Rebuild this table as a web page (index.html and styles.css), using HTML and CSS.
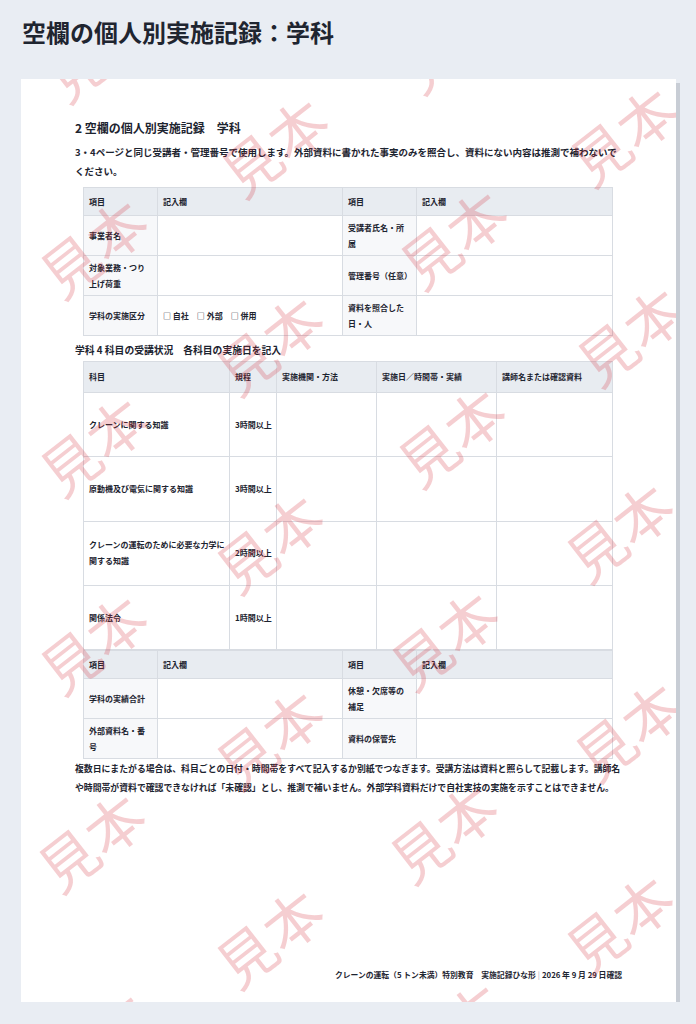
FILE: index.html
```html
<!DOCTYPE html>
<html lang="ja">
<head>
<meta charset="utf-8">
<title>空欄の個人別実施記録：学科</title>
<link rel="stylesheet" href="styles.css">
</head>
<body>
<header class="page-head">
  <h1 class="page-title">空欄の個人別実施記録：学科</h1>
</header>
<main class="sheet">
  <div class="wm-layer" aria-hidden="true">
    <span class="wm a0">見本</span><span class="wm a1">見本</span><span class="wm a2">見本</span><span class="wm a3">見本</span><span class="wm a4">見本</span><span class="wm a5">見本</span>
    <span class="wm b0">見本</span><span class="wm b1">見本</span><span class="wm b2">見本</span><span class="wm b3">見本</span><span class="wm b4">見本</span>
    <span class="wm c0">見本</span><span class="wm c1">見本</span><span class="wm c2">見本</span><span class="wm c3">見本</span><span class="wm c4">見本</span><span class="wm c5">見本</span>
    <span class="wm d0">見本</span><span class="wm d1">見本</span><span class="wm d2">見本</span><span class="wm d3">見本</span><span class="wm d4">見本</span>
  </div>

  <h2 class="sec-title">2 空欄の個人別実施記録　学科</h2>
  <p class="note lead">3・4ページと同じ受講者・管理番号で使用します。外部資料に書かれた事実のみを照合し、資料にない内容は推測で補わないでください。</p>

  <table class="grid pair">
    <colgroup><col class="w-lab"><col class="w-val"><col class="w-lab"><col class="w-val2"></colgroup>
    <thead>
      <tr><th>項目</th><th>記入欄</th><th>項目</th><th>記入欄</th></tr>
    </thead>
    <tbody>
      <tr><th class="lab">事業者名</th><td></td><th class="lab">受講者氏名・所属</th><td></td></tr>
      <tr><th class="lab">対象業務・つり上げ荷重</th><td></td><th class="lab">管理番号（任意）</th><td></td></tr>
      <tr><th class="lab">学科の実施区分</th><td><span class="chk">□ 自社</span><span class="chk">□ 外部</span><span class="chk">□ 併用</span></td><th class="lab">資料を照合した日・人</th><td></td></tr>
    </tbody>
  </table>

  <h3 class="sub-title">学科 4 科目の受講状況　各科目の実施日を記入</h3>

  <table class="grid subjects">
    <colgroup><col class="w-s1"><col class="w-s2"><col class="w-s3"><col class="w-s4"><col class="w-s5"></colgroup>
    <thead>
      <tr><th>科目</th><th>規程</th><th>実施機関・方法</th><th>実施日／時間帯・実績</th><th>講師名または確認資料</th></tr>
    </thead>
    <tbody>
      <tr><td>クレーンに関する知識</td><td>3時間以上</td><td></td><td></td><td></td></tr>
      <tr><td>原動機及び電気に関する知識</td><td>3時間以上</td><td></td><td></td><td></td></tr>
      <tr><td>クレーンの運転のために必要な力学に関する知識</td><td>2時間以上</td><td></td><td></td><td></td></tr>
      <tr><td>関係法令</td><td>1時間以上</td><td></td><td></td><td></td></tr>
    </tbody>
  </table>

  <table class="grid pair">
    <colgroup><col class="w-lab"><col class="w-val"><col class="w-lab"><col class="w-val2"></colgroup>
    <thead>
      <tr><th>項目</th><th>記入欄</th><th>項目</th><th>記入欄</th></tr>
    </thead>
    <tbody>
      <tr><th class="lab">学科の実績合計</th><td></td><th class="lab">休憩・欠席等の補足</th><td></td></tr>
      <tr><th class="lab">外部資料名・番号</th><td></td><th class="lab">資料の保管先</th><td></td></tr>
    </tbody>
  </table>

  <p class="note tail">複数日にまたがる場合は、科目ごとの日付・時間帯をすべて記入するか別紙でつなぎます。受講方法は資料と照らして記載します。講師名や時間帯が資料で確認できなければ「未確認」とし、推測で補いません。外部学科資料だけで自社実技の実施を示すことはできません。</p>

  <footer class="sheet-foot">クレーンの運転（5 トン未満）特別教育　実施記録ひな形<span class="sep">|</span>2026 年 9 月 29 日確認</footer>
</main>
</body>
</html>
```

FILE: styles.css
```css
* { box-sizing: border-box; }

html, body { margin: 0; padding: 0; }

body {
  width: 696px;
  background: #e9edf3;
  color: #1d2430;
  font-family: "Noto Sans CJK JP", "Noto Sans", sans-serif;
}

.page-head {
  height: 79px;
  padding: 16px 22px 0;
}

.page-title {
  margin: 0;
  font-size: 24px;
  line-height: 32px;
  font-weight: 700;
  color: #1f2530;
}

.sheet {
  position: relative;
  overflow: hidden;
  width: 655px;
  min-height: 923px;
  margin: 0 0 0 21px;
  padding: 40px 54px 20px;
  background: #ffffff;
  box-shadow: 4px 4px 0 #c8cdd5;
  display: flex;
  flex-direction: column;
}

/* watermark overlay */
.wm-layer {
  position: absolute;
  inset: 0;
  z-index: 2;
  pointer-events: none;
}

.wm {
  position: absolute;
  font-size: 58px;
  line-height: 1;
  font-weight: 400;
  white-space: nowrap;
  color: rgba(212, 52, 62, 0.24);
  transform: translate(-50%, -50%) rotate(-38deg);
}

.a0 { left: 76px; top: -29px; }
.a1 { left: 71px; top: 167px; }
.a2 { left: 71px; top: 365px; }
.a3 { left: 71px; top: 563px; }
.a4 { left: 69px; top: 761px; }
.a5 { left: 74px; top: 961px; }
.b0 { left: 252px; top: 66px; }
.b1 { left: 247px; top: 264px; }
.b2 { left: 247px; top: 462px; }
.b3 { left: 247px; top: 658px; }
.b4 { left: 247px; top: 857px; }
.c0 { left: 430px; top: -38px; }
.c1 { left: 431px; top: 158px; }
.c2 { left: 429px; top: 356px; }
.c3 { left: 422px; top: 559px; }
.c4 { left: 421px; top: 752px; }
.c5 { left: 429px; top: 951px; }
.d0 { left: 601px; top: 55px; }
.d1 { left: 608px; top: 255px; }
.d2 { left: 597px; top: 451px; }
.d3 { left: 606px; top: 650px; }
.d4 { left: 597px; top: 843px; }

/* text blocks */
.sec-title {
  margin: 0 0 6px;
  font-size: 12px;
  line-height: 18px;
  font-weight: 700;
}

.note {
  margin: 0;
  line-height: 19px;
  font-weight: 700;
}

.lead {
  font-size: 9.5px;
  margin-bottom: 6px;
}

.tail {
  font-size: 8.85px;
}

.sub-title {
  margin: 5px 0 1px;
  font-size: 9.8px;
  line-height: 19px;
  font-weight: 700;
}

/* tables */
.grid {
  width: 529px;
  margin-left: 8px;
  border-collapse: collapse;
  table-layout: fixed;
  font-size: 8px;
  line-height: 16px;
  font-weight: 700;
}

.grid th,
.grid td {
  border: 1px solid #d8dce2;
  text-align: left;
  vertical-align: middle;
  font-weight: 700;
}

.grid thead th {
  background: #e8ecf1;
  padding: 5.5px 5px;
}

.grid tbody th,
.grid tbody td {
  padding: 3.5px 5px;
}

.grid tbody th.lab { background: #f7f8fa; }

.w-lab { width: 74px; }
.w-val { width: 185px; }
.w-val2 { width: 196px; }

.subjects thead th { height: 31px; }
.subjects tbody td {
  height: 64.3px;
  padding: 3.5px 3px 3.5px 5px;
}

.w-s1 { width: 146px; }
.w-s2 { width: 47px; }
.w-s3 { width: 100px; }
.w-s4 { width: 120px; }
.w-s5 { width: 116px; }

.chk { margin-right: 8px; }

.sheet-foot {
  margin-top: auto;
  text-align: right;
  font-size: 7.8px;
  line-height: 14px;
  font-weight: 700;
}

.sep {
  color: #a3abb5;
  font-weight: 400;
  margin: 0 2px;
}
```
